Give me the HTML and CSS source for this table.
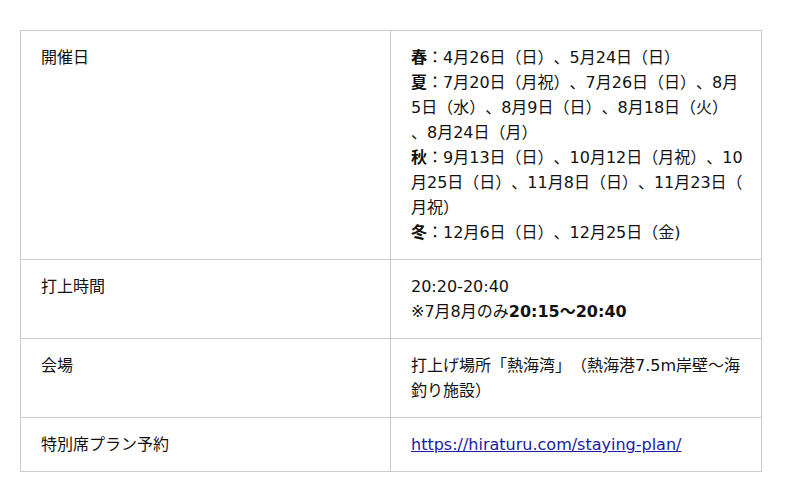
FILE: index.html
```html
<!DOCTYPE html>
<html lang="ja">
<head>
<meta charset="utf-8">
<link rel="stylesheet" href="styles.css">
</head>
<body>
<div class="wrap">
<table class="info">
<tbody>
<tr>
<th class="label">開催日</th>
<td class="value dates"><b>春</b>：4月26日（日）、5月24日（日）<br><b>夏</b>：7月20日（月祝）、7月26日（日）、8月<br>5日（水）、8月9日（日）、8月18日（火）<br>、8月24日（月）<br><b>秋</b>：9月13日（日）、10月12日（月祝）、10<br>月25日（日）、11月8日（日）、11月23日（<br>月祝）<br><b>冬</b>：12月6日（日）、12月25日（金)</td>
</tr>
<tr>
<th class="label">打上時間</th>
<td class="value">20:20-20:40<br>※7月8月のみ<b>20:15〜20:40</b></td>
</tr>
<tr>
<th class="label">会場</th>
<td class="value">打上げ場所「熱海湾」（熱海港7.5m岸壁〜海<br>釣り施設）</td>
</tr>
<tr>
<th class="label">特別席プラン予約</th>
<td class="value"><a class="link" href="#">https://hiraturu.com/staying-plan/</a></td>
</tr>
</tbody>
</table>
</div>
</body>
</html>
```
FILE: styles.css
```css
html, body {
  margin: 0;
  padding: 0;
  background: #fff;
}
.wrap {
  padding: 30px 20px;
}
.info {
  width: 742px;
  border-collapse: collapse;
  table-layout: fixed;
  font-family: "DejaVu Sans", "Noto Sans CJK JP", sans-serif;
  font-size: 16px;
  line-height: 25px;
  color: #111;
  text-spacing-trim: space-all;
}
.info th, .info td {
  border: 1px solid #cccccc;
  padding: 14px 20px 14px 20px;
  vertical-align: top;
  text-align: left;
}
.label {
  width: 329px;
  font-weight: normal;
}
.value {
  white-space: nowrap;
}
.info b {
  font-weight: bold;
}
.link {
  color: #1a1aa6;
  text-decoration: underline;
}
```
